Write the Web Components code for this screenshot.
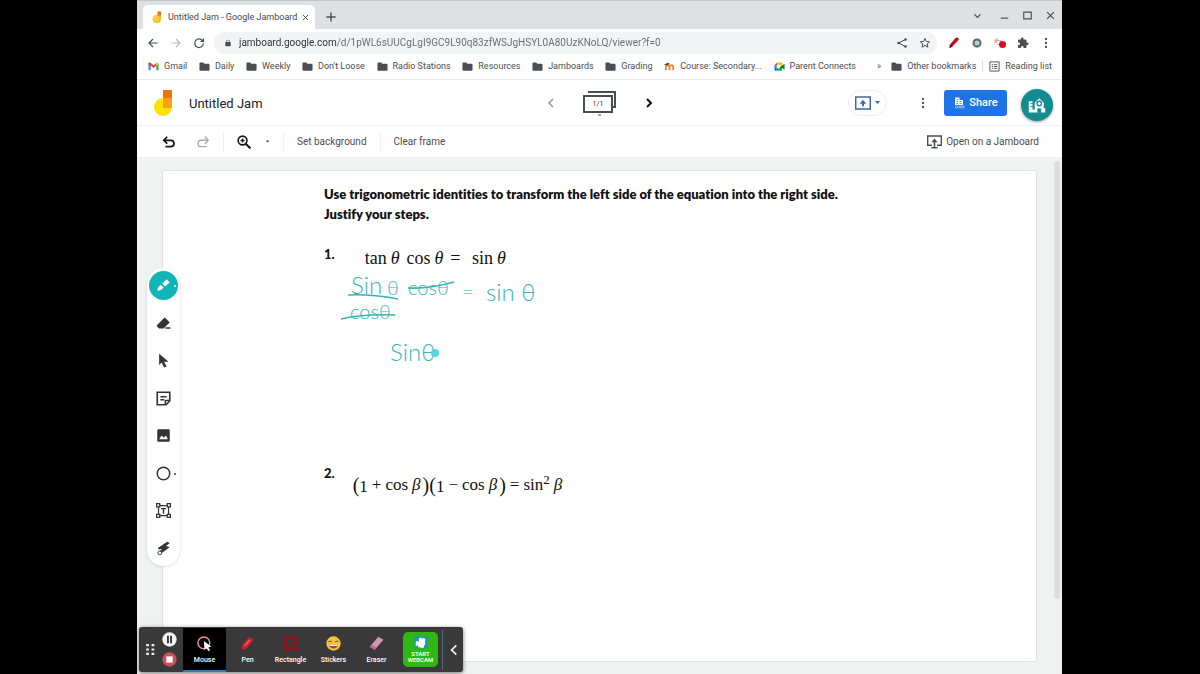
<!DOCTYPE html>
<html lang="en">
<head>
<meta charset="utf-8">
<title>Untitled Jam - Google Jamboard</title>
<style>
html, body { margin: 0; height: 100%; background: #000; }
body { font-family: Roboto, "Liberation Sans", sans-serif; font-size: 9px; color: #4a4d51; overflow: hidden; }
</style>
</head>
<body>
<jam-screen></jam-screen>
<script>
const base = `
*{box-sizing:border-box}
button{font:inherit;color:inherit;background:none;border:0;margin:0;padding:0;display:flex;align-items:center;justify-content:center;flex:none;white-space:nowrap}
a{color:inherit;text-decoration:none}
`;
function define(name, css, html) {
  const t = document.createElement('template');
  t.innerHTML = `<style>${base}${css}</style>${html}`;
  customElements.define(name, class extends HTMLElement {
    constructor() {
      super();
      this.attachShadow({ mode: 'open' }).append(t.content.cloneNode(true));
    }
  });
}

const icons = {
  back: '<path d="M21 12H4M12 4l-8 8 8 8" fill="none" stroke="currentColor" stroke-width="2.400"/>',
  forward: '<path d="M3 12h17M12 4l8 8-8 8" fill="none" stroke="currentColor" stroke-width="2.200"/>',
  reload: '<path d="M19 7.500A8.600 8.600 0 1 0 20.600 13" fill="none" stroke="currentColor" stroke-width="2.400"/><path d="M22 2v8h-8z"/>',
  lock: '<path d="M18 9h-1V7A5 5 0 0 0 7 7v2H6a2 2 0 0 0-2 2v9c0 1 1 2 2 2h12c1 0 2-1 2-2v-9a2 2 0 0 0-2-2zM9 7a3 3 0 0 1 6 0v2H9z"/>',
  share: '<path d="M19 5L5 12l14 7" fill="none" stroke="currentColor" stroke-width="2"/><circle cx="19" cy="5" r="2.500"/><circle cx="5" cy="12" r="2.500"/><circle cx="19" cy="19" r="2.500"/>',
  star: '<path d="M12 3l2.700 6 6.500.600-4.900 4.300 1.500 6.500L12 17l-5.800 3.400 1.500-6.500-4.900-4.300L9.300 9z" fill="none" stroke="currentColor" stroke-width="2"/>',
  pen: '<path d="M3 22l1-7L15 2c3-3 8 1 6 4L9 19z" fill="#b5121b"/><path d="M3 22l1-7 5 4z" fill="#5a0a10"/>',
  aperture: '<circle cx="12" cy="12" r="7" fill="#b9cdd2" stroke="#4c656d" stroke-width="4"/><path d="M12 2v6M21 9l-6 2M18 20l-4-5M6 20l4-5M3 9l6 2" stroke="#9db3ba" stroke-width="1"/>',
  camera: '<path d="M1 6l6-4 1 4h7v10H6v-4l-5 1z" fill="#f2a5ab"/><path d="M6 8h6v6H6z" fill="#fff"/><circle cx="17" cy="15" r="7" fill="#d50f22"/>',
  puzzle: '<path d="M20.500 11H19V7a2 2 0 0 0-2-2h-4V3.500a2.500 2.500 0 0 0-5 0V5H4a2 2 0 0 0-2 2v3.800h1.500a2.700 2.700 0 0 1 0 5.400H2V20c0 1 1 2 2 2h3.800v-1.500a2.700 2.700 0 0 1 5.400 0V22H17a2 2 0 0 0 2-2v-4h1.500a2.500 2.500 0 0 0 0-5z"/>',
  more: '<circle cx="12" cy="4" r="2.300"/><circle cx="12" cy="12" r="2.300"/><circle cx="12" cy="20" r="2.300"/>',
  folder: '<path d="M1 5a2 2 0 0 1 2-2h6l3 3h9a2 2 0 0 1 2 2v11a2 2 0 0 1-2 2H3a2 2 0 0 1-2-2z"/>',
  gmail: '<path d="M1 6v14h5V10z" fill="#4285f4"/><path d="M23 6v14h-5V10z" fill="#34a853"/><path d="M6 4.500v6l6 4.500 6-4.500v-6L12 9z" fill="#ea4335"/><path d="M1 6c0-3 3-3.500 5-1.500v6L1 7z" fill="#c5221f"/><path d="M23 6c0-3-3-3.500-5-1.500v6L23 7z" fill="#fbbc04"/>',
  moodle: '<path d="M4 20v-7a4 4 0 0 1 8 0v7M12 13a4 4 0 0 1 8 0v7" fill="none" stroke="#f0883a" stroke-width="4"/><path d="M0 8l8-4 5 2-6 4z" fill="#444"/>',
  meet: '<path d="M1 9l6-6v6z" fill="#ea4335"/><path d="M1 9h5v8H1z" fill="#2684fc"/><path d="M1 16h5v5H2z" fill="#0066da"/><path d="M6 16h11v5H6z" fill="#00ac47"/><path d="M7 3h9l2 2v5h-5V8H7z" fill="#ffba00"/><path d="M16 11l7-5v13l-6-5v4h-4v-5z" fill="#00832d"/>',
  list: '<path d="M2 2h20v20H2z" fill="none" stroke="currentColor" stroke-width="2"/><path d="M6 8h3M11 8h7M6 12h3M11 12h7M6 16h3M11 16h7" stroke="currentColor" stroke-width="2"/>',
  x: '<path d="M3 3l18 18M21 3L3 21" stroke="currentColor" stroke-width="3.200"/>',
  plus: '<path d="M12 1v22M1 12h22" stroke="currentColor" stroke-width="3.400"/>',
  down: '<path d="M4 9l8 8 8-8" fill="none" stroke="currentColor" stroke-width="3.500"/>',
  min: '<path d="M2 19h20" stroke="currentColor" stroke-width="3"/>',
  max: '<path d="M2 3h20v18H2z" fill="none" stroke="currentColor" stroke-width="3"/>',
  jam: '<path d="M12 8h8v8a8 8 0 1 1-8-8z" fill="#fbbc04"/><circle cx="10" cy="16" r="7" fill="#fdc84b"/><path d="M13 1h7v8h-7z" fill="#e8710a"/>',
  undo: '<path d="M9 3L3 9l6 6M3 9h12a5 5 0 0 1 0 11H6" fill="none" stroke="currentColor" stroke-width="3"/>',
  redo: '<path d="M15 3l6 6-6 6M21 9H9a5 5 0 0 0 0 11h9" fill="none" stroke="currentColor" stroke-width="2.400"/>',
  zoom: '<circle cx="9.500" cy="9.500" r="7.500" fill="none" stroke="currentColor" stroke-width="2.800"/><path d="M14 14l9 9" stroke="currentColor" stroke-width="3.500"/><path d="M9.500 6v7M6 9.500h7" stroke="currentColor" stroke-width="2.400"/>',
  left: '<path d="M16 4l-8 8 8 8" fill="none" stroke="currentColor" stroke-width="3"/>',
  right: '<path d="M8 4l8 8-8 8" fill="none" stroke="currentColor" stroke-width="4"/>',
  caret: '<path d="M3 7h18l-9 10z"/>',
  present: '<path d="M1 3h22v18H1z" fill="none" stroke="currentColor" stroke-width="2.400"/><path d="M12 17v-5" stroke="currentColor" stroke-width="3"/><path d="M7 13l5-6 5 6z"/>',
  org: '<path d="M4 1h9v5h7v10H4z"/><path d="M7 5h3M7 9h3M7 13h3M13 9h4M13 13h4" stroke="#1f73e8" stroke-width="1.500"/><circle cx="7" cy="20" r="2.500" fill="none" stroke="currentColor"/><circle cx="14" cy="20" r="2.500" fill="none" stroke="currentColor"/><circle cx="20" cy="20" r="2.500" fill="none" stroke="currentColor"/>',
  school: '<path d="M1 7h5v11h3V9l6-6 6 6v7h2v6H1z"/><circle cx="15" cy="10" r="3" fill="#fff" stroke="#128c91" stroke-width="1.800"/><path d="M13 22v-5h4v5zM3 10h4M3 14h4" fill="#128c91" stroke="#128c91"/>',
  board: '<path d="M8 18H1V3h22v15h-7" fill="none" stroke="currentColor" stroke-width="2.400"/><path d="M12 23V10M7 22h10" fill="none" stroke="currentColor" stroke-width="2.400"/><path d="M7 13l5-6 5 6z"/>',
  marker: '<path d="M2 20c1-5 2-8 6-9l4 4c-2 4-5 5-10 5z"/><path d="M10 9l7-7 5 5-8 7z"/><path d="M9 9l6 6" stroke="#12b5b5" stroke-width="1.500"/>',
  eraser: '<path d="M1 15L13 3q1-1 2 0l6 6q1 1 0 2l-9 9H5l-4-4zM15 18h8v2.500h-8z"/>',
  pointer: '<path d="M5 1l15 13h-7l4 8-4 1-4-8-4 4z"/>',
  note: '<path d="M2 2h20v14l-6 6H2z" fill="none" stroke="currentColor" stroke-width="2.600"/><path d="M7 9h10M7 14h6M15 22v-7h7" fill="none" stroke="currentColor" stroke-width="2.400"/>',
  image: '<path fill-rule="evenodd" d="M4 2h16q2 0 2 2v16q0 2-2 2H4q-2 0-2-2V4q0-2 2-2zm1 16h14l-3-6-2 2-2 1-3-3z"/>',
  circle: '<circle cx="12" cy="12" r="10" fill="none" stroke="currentColor" stroke-width="2.400"/>',
  textbox: '<path d="M4 4h16v16H4z" fill="none" stroke="currentColor" stroke-width="2"/><path d="M8 9h8M12 9v8" stroke="currentColor" stroke-width="2.200"/><path d="M1 1h5v5H1zM18 1h5v5h-5zM1 18h5v5H1zM18 18h5v5h-5z" fill="#fff" stroke="currentColor" stroke-width="2"/>',
  laser: '<path d="M3 11L18 1l4 2-6 5 6 2L8 20l-5-2 7-5-6 0z"/><circle cx="6" cy="19" r="3" fill="#fff" stroke="currentColor" stroke-width="1.500"/>',
  grip: '<path d="M4 2h5v4H4zM14 2h5v4h-5zM4 10h5v4H4zM14 10h5v4h-5zM4 18h5v4H4zM14 18h5v4h-5z"/>',
  pause: '<circle cx="12" cy="12" r="11.500" fill="#f4f4f4"/><path d="M8 6h3v12H8zM13 6h3v12h-3z" fill="#333"/>',
  stop: '<circle cx="12" cy="12" r="11.500" fill="#c9505c"/><path d="M7 7h10v10H7z" fill="#fff"/>',
  mouse: '<circle cx="11" cy="11" r="9.500" fill="none" stroke="#e58d96" stroke-width="2.400"/><path d="M11 8l12 9-5 1 3 5-3 1-3-5-3 3z" fill="#fff"/>',
  redpen: '<path d="M3 22l1-8L15 1l7 5L10 20z" fill="#d8202b"/><path d="M8 15l7-8" stroke="#f5a6ab" stroke-width="1.500"/>',
  rect: '<path d="M4 4h16v16H4z" fill="none" stroke="#96101c" stroke-width="4"/><path d="M1 1h6v6H1zM17 1h6v6h-6zM1 17h6v6H1zM17 17h6v6h-6z" fill="#96101c"/>',
  sticker: '<circle cx="12" cy="12" r="11.500" fill="#f8c63d"/><path d="M4 10q2.500-4 5 0M15 10q2.500-4 5 0" fill="none" stroke="#8a4e14" stroke-width="1.800"/><path d="M5 14h14q-1 6-7 6t-7-6z" fill="#b3402e"/><path d="M6 14h12v2H6z" fill="#fff"/>',
  pinkeraser: '<path d="M1 17L15 1l8 5L9 22z" fill="#d993b4"/><path d="M1 17l3-3 8 5-3 3z" fill="#b8698f"/>',
  webcam: '<path d="M1 1h22v20H1z" fill="#1f8fc4"/><path d="M3 9h3l2 1V8h1a3 3 0 1 1 5-3 3 3 0 1 1 5 4v7h-2v4h-5l-5-1v-4l-2 2H3z" fill="#fff"/>'
};
customElements.define('ui-icon', class extends HTMLElement {
  constructor() { super(); this.attachShadow({ mode: 'open' }); }
  connectedCallback() {
    this.shadowRoot.innerHTML = `<style>:host{display:inline-block;flex:none;width:var(--size,12px);height:var(--size,12px)}svg{display:block;width:100%;height:100%}</style><svg viewBox="0 0 24 24" fill="currentColor" aria-hidden="true">${icons[this.getAttribute('name')]}</svg>`;
  }
});

define('tab-strip', `
:host{display:flex;align-items:center;height:29px;padding:0 7px 0 6px;background:#dee1e3;border-top:1px solid #c3c6c8}
.tab{align-self:flex-end;display:flex;align-items:center;gap:5px;width:172px;height:24px;padding:0 8px;background:#fff;border-radius:5px 5px 0 0;color:#45484c}
.tab span{flex:1;white-space:nowrap}
.add{margin:4px 0 0 11px;--size:10px}
.win{margin-left:auto;display:flex;gap:14px;--size:9px}
.search{margin-right:4px}
`, `<div class="tab"><ui-icon name="jam"></ui-icon><span>Untitled Jam - Google Jamboard</span><button aria-label="Close tab" style="--size:7px"><ui-icon name="x"></ui-icon></button></div>
<button class="add" aria-label="New tab"><ui-icon name="plus"></ui-icon></button>
<div class="win"><button class="search" aria-label="Search tabs"><ui-icon name="down"></ui-icon></button><button aria-label="Minimize"><ui-icon name="min"></ui-icon></button><button aria-label="Maximize"><ui-icon name="max"></ui-icon></button><button aria-label="Close"><ui-icon name="x"></ui-icon></button></div>`);

define('address-bar', `
:host{display:flex;align-items:center;height:27px;padding:0 10px;background:#fff;gap:11px}
.off{color:#b4b6b8}
.pill{flex:1;display:flex;align-items:center;height:22px;border-radius:11px;background:#f1f3f4;padding:0 6px 0 10px;gap:11px;margin:0 0 0 -2px}
input{flex:1;min-width:0;border:0;padding:0;outline:0;font:10px Roboto,sans-serif;color:#5f6368;background:linear-gradient(90deg,#2b2d30 0 98px,#666a6e 98px);background-clip:text;-webkit-background-clip:text;-webkit-text-fill-color:transparent;margin-left:-4px}
`, `<button aria-label="Back"><ui-icon name="back"></ui-icon></button><button class="off" aria-label="Forward"><ui-icon name="forward"></ui-icon></button><button aria-label="Reload"><ui-icon name="reload"></ui-icon></button>
<div class="pill"><ui-icon name="lock" style="--size:8px"></ui-icon><input aria-label="Address" value="jamboard.google.com/d/1pWL6sUUCgLgI9GC9L90q83zfWSJgHSYL0A80UzKNoLQ/viewer?f=0"><button aria-label="Share page"><ui-icon name="share"></ui-icon></button><button aria-label="Bookmark"><ui-icon name="star"></ui-icon></button></div>
<button aria-label="Pen extension"><ui-icon name="pen"></ui-icon></button><button aria-label="Capture extension"><ui-icon name="aperture"></ui-icon></button><button aria-label="Recorder extension"><ui-icon name="camera"></ui-icon></button><button aria-label="Extensions"><ui-icon name="puzzle"></ui-icon></button><button aria-label="Menu"><ui-icon name="more"></ui-icon></button>`);

define('bookmark-link', `
:host{display:block;flex:none}
a{display:flex;align-items:center;gap:5px;white-space:nowrap;--size:11px}
`, `<a href="#"><slot name="icon"><ui-icon name="folder"></ui-icon></slot><slot></slot></a>`);

define('bookmarks-bar', `
:host{display:flex;align-items:center;height:24px;padding:0 10px 3px 11px;background:#fff;border-bottom:1px solid #e8eaea}
nav{display:flex;flex:1;align-items:center;justify-content:space-between;max-width:708px}
.more{margin:0 10px 0 auto}
i{width:1px;height:12px;background:#ddd;margin:0 6px}
`, `<nav><bookmark-link><ui-icon slot="icon" name="gmail"></ui-icon>Gmail</bookmark-link><bookmark-link>Daily</bookmark-link><bookmark-link>Weekly</bookmark-link><bookmark-link>Don't Loose</bookmark-link><bookmark-link>Radio Stations</bookmark-link><bookmark-link>Resources</bookmark-link><bookmark-link>Jamboards</bookmark-link><bookmark-link>Grading</bookmark-link><bookmark-link><ui-icon slot="icon" name="moodle"></ui-icon>Course: Secondary...</bookmark-link><bookmark-link><ui-icon slot="icon" name="meet"></ui-icon>Parent Connects</bookmark-link></nav>
<button class="more" aria-label="More bookmarks">»</button><bookmark-link>Other bookmarks</bookmark-link><i></i><bookmark-link><ui-icon slot="icon" name="list"></ui-icon>Reading list</bookmark-link>`);

define('jam-header', `
:host{display:grid;grid-template-columns:1fr auto 1fr;align-items:center;height:46px;padding:0 10px 0 17px;background:#fff;border-bottom:1px solid #f1f3f3}
.left,.mid,.right{display:flex;align-items:center}
.left{gap:16px}
h1{margin:0;padding-top:2px;font-size:13px;font-weight:400;color:#202124}
.logo{width:19px;height:26px}
.mid{gap:26px;margin-right:6px}
.frames{position:relative}
.frames svg{display:block}
.frames span{position:absolute;left:0;top:6px;width:30px;line-height:18px;text-align:center;font-size:7px;color:#333}
.right{justify-content:flex-end}
.present{width:39px;height:26px;border:1px solid #eceeef;border-radius:13px;gap:3px;color:#41659f}
.dots{margin:0 15px 0 30px}
.share{width:63px;height:26px;border-radius:3px;background:#1f73e8;color:#fff;font-size:11px;font-weight:500;gap:4px}
.me{width:32px;height:32px;margin:5px -1px 0 14px;border-radius:50%;background:#128c91;color:#fff;box-shadow:0 1px 3px #0006;--size:18px}
`, `<div class="left"><svg class="logo" viewBox="0 0 19 26"><circle cx="9" cy="17" r="9" fill="#fde100"/><path d="M9 9h9v8a9 9 0 0 1-9 0z" fill="#fbbc04"/><path d="M9 8h9v10H9z" fill="#f9a01b"/><path d="M9 0h9v8H9z" fill="#e8760a"/></svg><h1>Untitled Jam</h1></div>
<div class="mid"><button aria-label="Previous frame" style="color:#999"><ui-icon name="left"></ui-icon></button><button class="frames" aria-label="Frames"><svg width="34" height="28" viewBox="0 0 34 28" fill="none" stroke="#4a4d51"><path d="M5 3h27v15h-2" stroke-width="2"/><path d="M1 7h28v16H1z" stroke-width="2" fill="#fff"/><path d="M15 26h3" stroke-width="1"/></svg><span>1/1</span></button><button aria-label="Next frame" style="color:#111"><ui-icon name="right"></ui-icon></button></div>
<div class="right"><button class="present" aria-label="Present"><ui-icon name="present" style="--size:16px"></ui-icon><ui-icon name="caret" style="--size:7px"></ui-icon></button><button class="dots" aria-label="More actions"><ui-icon name="more"></ui-icon></button><button class="share"><ui-icon name="org"></ui-icon>Share</button><button class="me" aria-label="Account"><ui-icon name="school"></ui-icon></button></div>`);

define('jam-toolbar', `
:host{display:flex;align-items:center;height:31px;padding:0 23px 0 25px;background:#fff;font-size:10px;--size:14px}
.ink{color:#151515}
i{width:1px;height:20px;background:#eef0f0;margin:0 13px}
.open{margin-left:auto;gap:4px;--size:15px}
`, `<button class="ink" aria-label="Undo"><ui-icon name="undo"></ui-icon></button><button aria-label="Redo" style="color:#aaa;margin-left:20px"><ui-icon name="redo"></ui-icon></button><i></i><button class="ink" aria-label="Zoom"><ui-icon name="zoom"></ui-icon></button><button aria-label="Zoom levels" style="margin-left:14px;--size:5px"><ui-icon name="caret"></ui-icon></button><i></i><button>Set background</button><i></i><button>Clear frame</button><button class="open"><ui-icon name="board"></ui-icon>Open on a Jamboard</button>`);

define('tool-rail', `
:host{position:absolute;left:10px;top:111px;width:33px;height:298px;display:flex;flex-direction:column;align-items:center;justify-content:space-between;padding:3px 0;background:#fff;border-radius:17px;box-shadow:0 1px 3px #0002;color:#333;--size:15px}
button{width:29px;height:29px;position:relative}
.on{border-radius:50%;background:#12b5b5;color:#fff}
b{position:absolute;right:2px;top:14px;width:2px;height:2px;border-radius:50%;background:currentColor}
`, `<button class="on" aria-label="Pen"><ui-icon name="marker"></ui-icon><b></b></button><button aria-label="Erase"><ui-icon name="eraser"></ui-icon></button><button aria-label="Select"><ui-icon name="pointer"></ui-icon></button><button aria-label="Sticky note"><ui-icon name="note"></ui-icon></button><button aria-label="Add image"><ui-icon name="image"></ui-icon></button><button aria-label="Circle"><ui-icon name="circle"></ui-icon><b></b></button><button aria-label="Text box"><ui-icon name="textbox"></ui-icon></button><button aria-label="Laser"><ui-icon name="laser"></ui-icon></button>`);

define('work-sheet', `
:host{display:block;padding:13px 160px 0 161px;font:800 13px/20px Lato,"Open Sans",sans-serif;font-variant-ligatures:none;color:#111}
p{margin:0;white-space:nowrap}
ol{list-style:none;margin:0;padding:0}
li{display:flex;gap:18px}
li>b{line-height:20px}
.eq{font:18px/22px "Liberation Serif",serif;display:flex;white-space:nowrap}
.one{gap:4px;padding:3px 0 0 12px}
.two{gap:4px;padding-top:11px;font-size:17px}
.w{margin-left:3px}
.p{font-size:20px}
.c{margin:0 -4px 0 -2px}
sup{font-size:13px;line-height:0;vertical-align:6px}
`, `<p>Use trigonometric identities to transform the left side of the equation into the right side.<br>Justify your steps.</p>
<ol><li style="margin-top:20px"><b>1.</b><div class="eq one"><span>tan</span><i>θ</i><span class="w">cos</span><i>θ</i><span class="w">=</span><span class="w">&nbsp;sin</span><i>θ</i></div></li>
<li style="margin-top:194px"><b>2.</b><div class="eq two"><span><span class="p">(</span>1</span><span>+</span><span>cos</span><i>β</i><span class="p c">)</span><span><span class="p">(</span>1</span><span>−</span><span>cos</span><i>β</i><span class="p" style="margin-left:-2px">)</span><span>=</span><span>sin<sup>2</sup></span><i>β</i></div></li></ol>`);

define('ink-layer', `
:host{position:absolute;inset:0;pointer-events:none;color:#35b5b7;font:300 24px/24px Lato,sans-serif}
span{position:absolute;white-space:nowrap}
.small{font-size:20px}
svg{position:absolute;left:170px;top:100px}
`, `<span style="left:188px;top:102px">Sin<span class="small" style="left:36px;top:2px">θ</span></span><span class="small" style="left:245px;top:104px">cosθ</span><span class="small" style="left:299px;top:108px">=</span><span style="left:323px;top:109px">sin θ</span><span class="small" style="left:187px;top:128px">cosθ</span><span style="left:227px;top:169px">Sinθ</span>
<svg width="220" height="100" viewBox="0 0 220 100" fill="none" stroke="#35b5b7" stroke-width="1.500"><path d="M15 24q22-1 50 4M8 48q22-5 54-4M75 17q22 1 46-6"/><circle cx="102" cy="82" r="4" fill="#55d6da" stroke="none"/></svg>`);

define('record-button', `
:host{display:block;flex:none;width:43px;height:44px}
button{width:100%;height:100%;flex-direction:column;gap:5px;padding-top:2px;font:500 7px/9px Roboto,sans-serif;color:#fff;--size:15px}
:host([active]) button{background:#000;border-bottom:2px solid #2d7fb8;padding-top:3px}
`, `<button><slot name="icon"></slot><span><slot></slot></span></button>`);

define('recorder-bar', `
:host{position:absolute;left:2px;bottom:2px;display:flex;align-items:center;height:45px;width:324px;background:#393939;border-radius:3px;box-shadow:0 1px 4px #0008;color:#eee}
.rec{display:flex;flex-direction:column;gap:5px;margin:0 6px 0 5px;--size:15px}
.cam{width:35px;height:35px;border-radius:5px;background:#2fb713;color:#e9ffe4;flex-direction:column;gap:1px;font:700 6px/6px Roboto,sans-serif;white-space:normal;margin-left:5px;--size:14px}
i{width:1px;height:40px;background:#56687a;margin:0 4px}
`, `<ui-icon name="grip" style="--size:13px;margin-left:5px"></ui-icon><div class="rec"><button aria-label="Pause"><ui-icon name="pause"></ui-icon></button><button aria-label="Stop"><ui-icon name="stop"></ui-icon></button></div>
<record-button active><ui-icon slot="icon" name="mouse"></ui-icon>Mouse</record-button><record-button><ui-icon slot="icon" name="redpen"></ui-icon>Pen</record-button><record-button><ui-icon slot="icon" name="rect"></ui-icon>Rectangle</record-button><record-button><ui-icon slot="icon" name="sticker"></ui-icon>Stickers</record-button><record-button><ui-icon slot="icon" name="pinkeraser"></ui-icon>Eraser</record-button>
<button class="cam"><ui-icon name="webcam"></ui-icon><span>START<br>WEBCAM</span></button><i></i><button aria-label="Collapse"><ui-icon name="left" style="--size:14px"></ui-icon></button>`);

define('jam-board', `
:host{position:relative;display:block;flex:1;min-height:0;padding:13px 25px 12px;background:#f0f2f2}
.frame{position:relative;height:100%;background:#fff;border:1px solid #e0e3e3;overflow:hidden}
.bar{position:absolute;right:2px;top:4px;width:6px;height:438px;background:#dcdede;border-radius:3px}
`, `<div class="frame"><slot></slot></div><div class="bar"></div><tool-rail></tool-rail><recorder-bar></recorder-bar>`);

define('jam-screen', `
:host{display:flex;flex-direction:column;height:100vh;padding:0 138px 0 137px;background:#000}
`, `<tab-strip></tab-strip><address-bar></address-bar><bookmarks-bar></bookmarks-bar><jam-header></jam-header><jam-toolbar></jam-toolbar><jam-board><work-sheet></work-sheet><ink-layer></ink-layer></jam-board>`);
</script>
</body>
</html>
